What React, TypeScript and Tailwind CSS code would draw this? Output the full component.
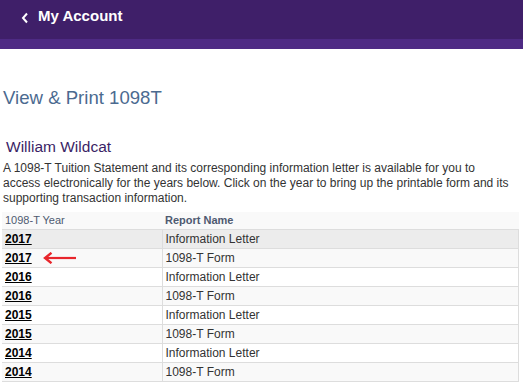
const rows = [
  { year: '2017', name: 'Information Letter' },
  { year: '2017', name: '1098-T Form', arrow: true },
  { year: '2016', name: 'Information Letter' },
  { year: '2016', name: '1098-T Form' },
  { year: '2015', name: 'Information Letter' },
  { year: '2015', name: '1098-T Form' },
  { year: '2014', name: 'Information Letter' },
  { year: '2014', name: '1098-T Form' },
]

export default function App() {
  return (
    <div className="min-h-[389px] w-[523px] bg-white font-['Liberation_Sans',Arial,sans-serif] text-[#333]">
      {/* Header */}
      <div className="flex h-[39px] items-start bg-[#3f1f69] pl-[21px] pt-[6px]">
        <svg width="8" height="12" viewBox="0 0 8 12" className="mt-[6px]">
          <path d="M6 1.5 L2 6 L6 10.5" fill="none" stroke="#fff" strokeWidth="2" />
        </svg>
        <span className="ml-[9px] text-[15px] font-bold leading-5 text-white">My Account</span>
      </div>
      <div className="h-[10px] bg-[#4e2a84]" />

      <h1 className="ml-[3px] mt-[37px] text-[18.6px] leading-6 text-[#4b6a90]">View &amp; Print 1098T</h1>

      <h2 className="ml-[6px] mt-[27px] text-[15.5px] leading-5 text-[#3b1f66]">William Wildcat</h2>
      <p className="ml-[3px] mt-[4px] w-[510px] text-[12px] leading-[15px]">
        A 1098-T Tuition Statement and its corresponding information letter is available for you to access
        electronically for the years below. Click on the year to bring up the printable form and its supporting
        transaction information.
      </p>

      <table className="ml-[2px] mt-[6px] w-[517px] border-collapse text-[12px]">
        <thead>
          <tr className="bg-[#f9f9f9]">
            <th className="h-[17px] w-[160px] px-[3px] text-left text-[11px] font-normal leading-[14px] text-[#4e5a70]">
              1098-T Year
            </th>
            <th className="px-[3px] text-left text-[11px] font-bold leading-[14px] text-[#4e5a70]">Report Name</th>
          </tr>
        </thead>
        <tbody>
          {rows.map((r, i) => (
            <tr
              key={i}
              className={i === 0 ? 'bg-[#ececec]' : i % 2 === 1 ? 'bg-[#f9f9f9]' : 'bg-white'}
            >
              <td className="h-[19px] border-y border-r border-[#dddddd] px-[3px] leading-[14px]">
                <span className="relative">
                  <a className="font-bold text-black underline">{r.year}</a>
                  {r.arrow && (
                    <svg width="34" height="12" viewBox="0 0 34 12" className="absolute left-[38px] top-[1px]">
                      <path d="M33 6 H3" stroke="#e8262c" strokeWidth="2.2" />
                      <path d="M8.5 0.8 L2 6 L8.5 11.2" fill="none" stroke="#e8262c" strokeWidth="2.4" />
                    </svg>
                  )}
                </span>
              </td>
              <td className="border-y border-r border-[#dddddd] px-[3px] leading-[14px]">{r.name}</td>
            </tr>
          ))}
        </tbody>
      </table>
    </div>
  )
}
